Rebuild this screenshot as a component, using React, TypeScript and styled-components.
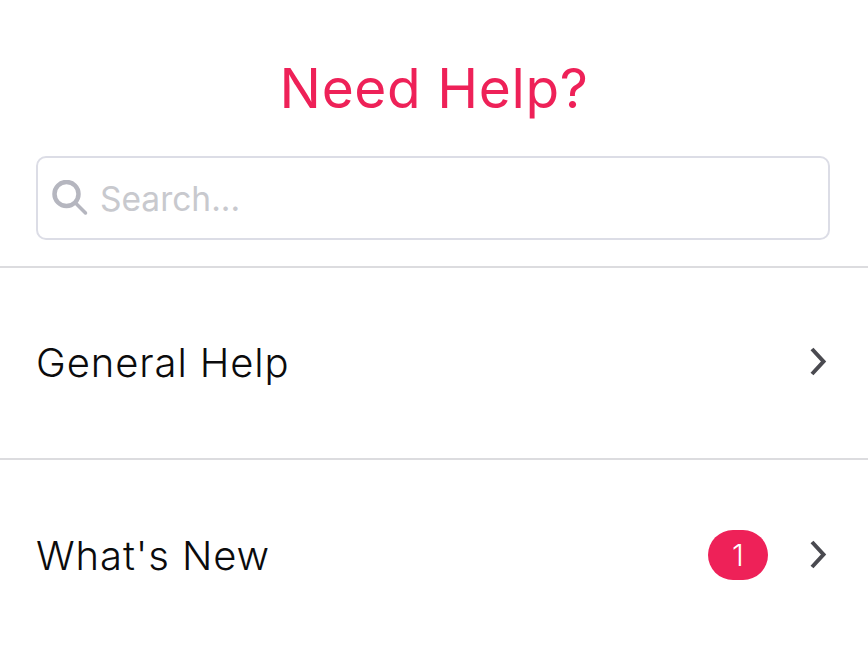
import styled, { createGlobalStyle } from "styled-components"

const GlobalStyle = createGlobalStyle`
  html, body {
    margin: 0;
    padding: 0;
    background: #fff;
  }
  body {
    font-family: "Inter", "Noto Sans", sans-serif;
  }
`

const Chevron = () => (
  <ChevronIcon viewBox="0 0 20 30" aria-hidden="true">
    <path d="M4 2 L15.5 14.5 L4 27" />
  </ChevronIcon>
)

const App = () => {
  return (
    <Page>
      <GlobalStyle />
      <Title>Need Help?</Title>
      <SearchWrap>
        <SearchBox>
          <SearchIcon viewBox="0 0 36 36" aria-hidden="true">
            <circle cx="14.5" cy="14" r="12" />
            <path d="M23.5 23 L33.5 33" />
          </SearchIcon>
          <SearchInput placeholder="Search..." readOnly />
        </SearchBox>
      </SearchWrap>
      <Row>
        <RowLabel>General Help</RowLabel>
        <RowEnd>
          <Chevron />
        </RowEnd>
      </Row>
      <Row>
        <RowLabel>What's New</RowLabel>
        <RowEnd>
          <Badge>1</Badge>
          <Chevron />
        </RowEnd>
      </Row>
    </Page>
  )
}

export default App

const Page = styled.div`
  width: 868px;
  height: 650px;
  overflow: hidden;
  background: #fff;
`

const Title = styled.h1`
  margin: 0;
  padding-top: 54px;
  height: 156px;
  box-sizing: border-box;
  text-align: center;
  font-size: 55px;
  line-height: 68px;
  font-weight: 400;
  letter-spacing: 0.6px;
  color: #ee2158;
`

const SearchWrap = styled.div`
  padding: 0 38px 26px 36px;
  border-bottom: 2px solid #dcdcdf;
`

const SearchBox = styled.div`
  display: flex;
  align-items: center;
  height: 84px;
  box-sizing: border-box;
  padding-left: 14px;
  border: 2px solid #dcdde6;
  border-radius: 10px;
`

const SearchIcon = styled.svg`
  width: 36px;
  height: 36px;
  flex: none;
  margin-right: 12px;
  fill: none;
  stroke: #b5b6bf;

  circle {
    stroke-width: 4.5;
  }

  path {
    stroke-width: 3.5;
    stroke-linecap: round;
  }
`

const SearchInput = styled.input`
  flex: 1;
  min-width: 0;
  border: none;
  outline: none;
  padding: 2px 0 0;
  background: transparent;
  font-family: inherit;
  font-size: 33.5px;
  color: #c8c9ce;

  &::placeholder {
    color: #c8c9ce;
    opacity: 1;
  }
`

const Row = styled.div`
  display: flex;
  align-items: center;
  justify-content: space-between;
  height: 192px;
  box-sizing: border-box;
  padding: 0 40px 2px 36px;
  border-bottom: 2px solid #dcdcdf;

  &:last-child {
    border-bottom: none;
  }
`

const RowLabel = styled.span`
  font-size: 40px;
  font-weight: 300;
  letter-spacing: 0.9px;
  color: #0b0b0c;
`

const RowEnd = styled.div`
  display: flex;
  align-items: center;
  gap: 40px;
`

const Badge = styled.span`
  width: 60px;
  height: 50px;
  border-radius: 25px;
  background: #ee2158;
  color: #fff;
  font-size: 30px;
  font-weight: 300;
  display: flex;
  align-items: center;
  justify-content: center;
`

const ChevronIcon = styled.svg`
  width: 20px;
  height: 30px;
  flex: none;
  fill: none;

  path {
    stroke: #4a4a50;
    stroke-width: 4;
    stroke-linecap: butt;
    stroke-linejoin: miter;
  }
`
